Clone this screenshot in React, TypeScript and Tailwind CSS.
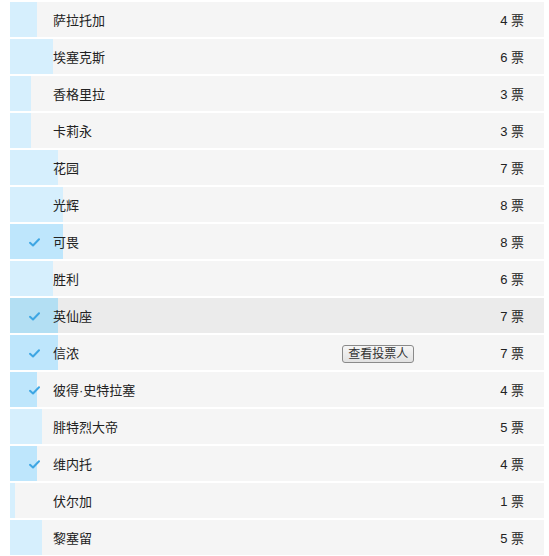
import * as React from "react"

type Option = {
  name: string
  votes: number
  bar: number
  checked?: boolean
}

const options: Option[] = [
  { name: "萨拉托加", votes: 4, bar: 27 },
  { name: "埃塞克斯", votes: 6, bar: 43 },
  { name: "香格里拉", votes: 3, bar: 21 },
  { name: "卡莉永", votes: 3, bar: 21 },
  { name: "花园", votes: 7, bar: 48 },
  { name: "光辉", votes: 8, bar: 53 },
  { name: "可畏", votes: 8, bar: 53, checked: true },
  { name: "胜利", votes: 6, bar: 43 },
  { name: "英仙座", votes: 7, bar: 48, checked: true },
  { name: "信浓", votes: 7, bar: 48, checked: true },
  { name: "彼得·史特拉塞", votes: 4, bar: 27, checked: true },
  { name: "腓特烈大帝", votes: 5, bar: 32 },
  { name: "维内托", votes: 4, bar: 27, checked: true },
  { name: "伏尔加", votes: 1, bar: 5 },
  { name: "黎塞留", votes: 5, bar: 32 },
]

function Check() {
  return (
    <svg width="11" height="9" viewBox="0 0 11 9" className="block" aria-hidden="true">
      <path d="M1 4.8 L4 7.5 L10 1.2" fill="none" stroke="#3ea6e3" strokeWidth="2" strokeLinecap="round" strokeLinejoin="round" />
    </svg>
  )
}

export default function App(): React.JSX.Element {
  const [hover, setHover] = React.useState(8)

  return (
    <div className="w-[549px] h-[556px] bg-white pt-[2px] pl-[10px] pr-[5px] overflow-hidden"
      style={{ fontFamily: "'Liberation Sans', 'Noto Sans CJK SC', sans-serif" }}>
      {
        options.map((item, i: number) => {
          const isHover = hover === i
          const barColor = isHover ? "bg-[#b3dff3]" : item.checked ? "bg-[#bee6fc]" : "bg-[#d6effd]"
          return (
            <div key={`option-${i}`}
              onMouseEnter={() => setHover(i)}
              className={`relative h-[35px] mb-[2px] pt-[2px] flex items-center text-[13px] text-[#222] ${isHover ? "bg-[#ebebeb]" : "bg-[#f5f5f5]"}`}>
              <div className={`absolute left-0 top-0 bottom-0 ${barColor}`} style={{ width: item.bar }} />
              <div className="relative w-[43px] flex justify-end pr-[13px]">
                {item.checked && <Check />}
              </div>
              <span className="relative flex-1">{item.name}</span>
              {
                i === 9 &&
                <button type="button"
                  className="relative mr-[86px] h-[18px] px-[5px] text-[12px] leading-[16px] text-[#333] border border-[#8a8a8a] rounded-[3px] bg-gradient-to-b from-[#f6f6f6] to-[#e2e2e2]">
                  查看投票人
                </button>
              }
              <span className="relative pr-[20px] text-[13px]">{item.votes} 票</span>
            </div>
          )
        })
      }
    </div>
  )
}
